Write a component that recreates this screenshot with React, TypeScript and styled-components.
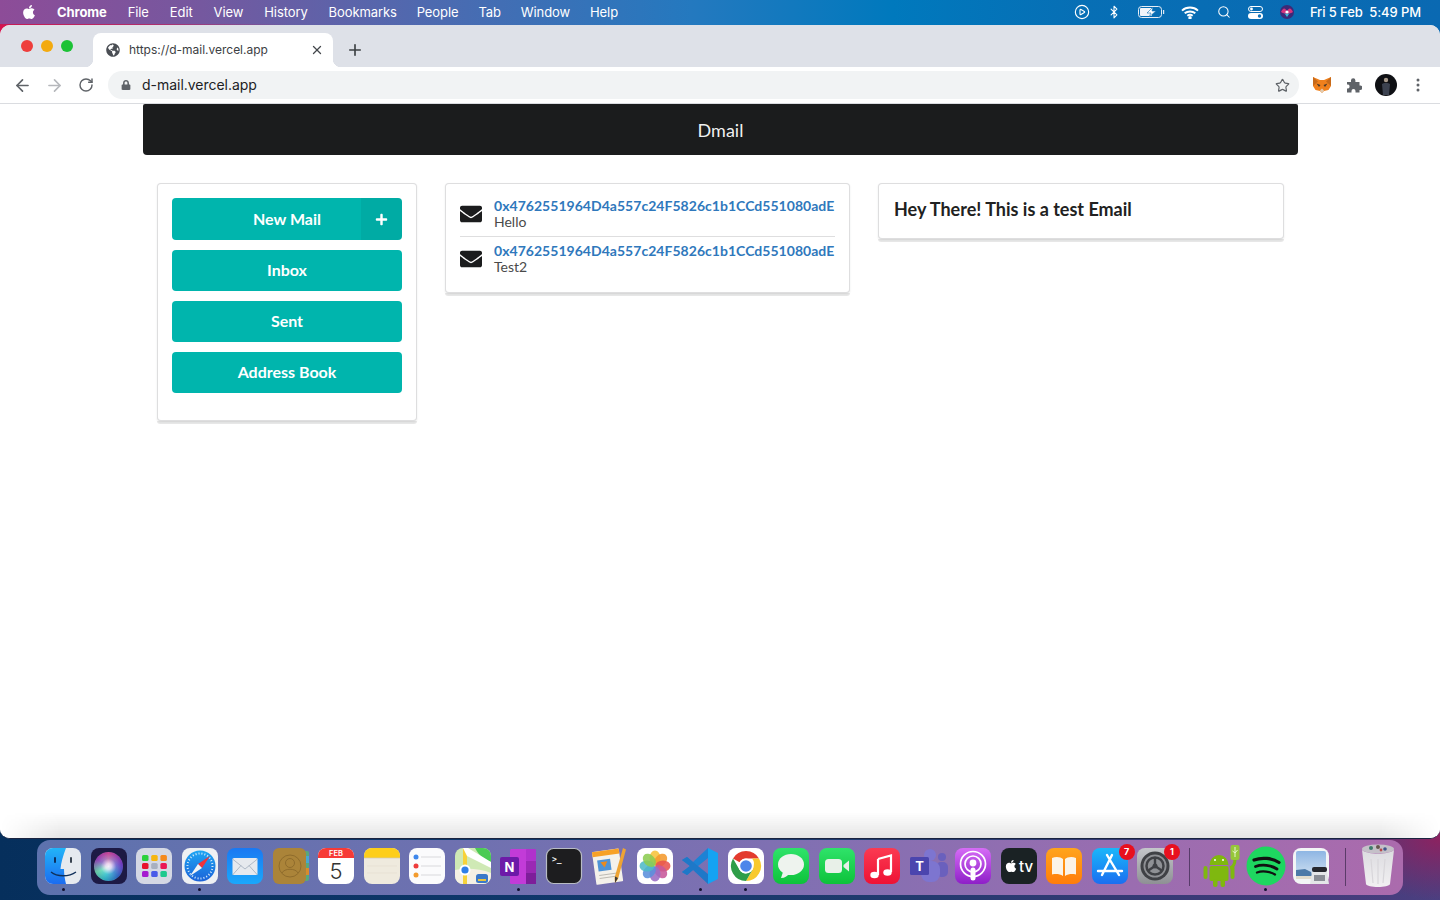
import React from 'react';
import styled, { createGlobalStyle } from 'styled-components';
import { ArrowLeft, ArrowRight, RotateCw, X, Plus, Star, Search, Bluetooth, CirclePlay } from 'lucide-react';
import { FaApple, FaEnvelope, FaGlobeAmericas, FaLock, FaPlus } from 'react-icons/fa';

const Global = createGlobalStyle`
  html, body { margin: 0; padding: 0; height: 100%; overflow: hidden; }
  body { font-family: "Lato", "Liberation Sans", sans-serif; }
  * { box-sizing: border-box; }
`;

const Desktop = styled.div`
  width: 1440px; height: 900px; display: flex; flex-direction: column; overflow: hidden;
  background:
    linear-gradient(90deg, #d6144f 0, #7a58a4 22%, #0a69b2 100%) 0 25px / 100% 14px no-repeat,
    radial-gradient(ellipse 100px 62px at 100% 838px, #8c2260 0, rgba(140,34,96,0) 100%),
    linear-gradient(90deg, #062f5c 0%, #0f376a 35%, #1f3a6e 60%, #3d3a78 85%, #4b3f80 100%);
`;
const MenuBar = styled.header`
  height: 25px; flex: none; display: flex; align-items: center; padding: 0 19px 1px 21px; color: #fff;
  font: 500 13px "Inter", "Liberation Sans", sans-serif;
  background:
    linear-gradient(90deg, #c81a55 0, rgba(200,26,85,.7) 10%, rgba(200,26,85,0) 20%) bottom / 100% 1px no-repeat,
    linear-gradient(90deg, #8d4c98 0%, #75589f 14%, #4d6ab0 30%, #2479bf 48%, #0079bd 62%, #076fb5 75%, #0a69b2 100%);
`;
const MenuItem = styled.span<{ $bold?: boolean; $gap: number }>`
  margin-left: ${p => p.$gap}px; font-weight: ${p => (p.$bold ? 700 : 400)}; letter-spacing: -0.1px; white-space: nowrap;
`;
const Spacer = styled.div`flex: 1;`;
const StatusIcon = styled.span<{ $w: number }>`
  width: ${p => p.$w}px; display: flex; justify-content: center; align-items: center;
`;
const Clock = styled.span`
  font-size: 13px; letter-spacing: -0.1px; white-space: pre; margin-left: 12px;
`;

const Win = styled.main`
  flex: 1; min-height: 0; display: flex; flex-direction: column; position: relative; overflow: hidden;
  border-radius: 10px; background: #fff; border-bottom: 1px solid #1b2440;
`;
const TabStrip = styled.div`
  height: 42px; flex: none; display: flex; background: #dee1e8; padding-top: 8px;
`;
const Lights = styled.div`
  display: flex; gap: 8px; width: 93px; padding: 7px 0 0 21px;
`;
const Light = styled.i<{ $c: string }>`
  width: 12px; height: 12px; border-radius: 50%; background: ${p => p.$c};
`;
const Tab = styled.div`
  position: relative; width: 240px; height: 34px; display: flex; align-items: center; gap: 9px;
  padding: 0 9px 0 13px; background: #fff; border-radius: 8px 8px 0 0; color: #3c4043;
  font: 400 12px "Inter", "Liberation Sans", sans-serif;
  &::before, &::after { content: ""; position: absolute; bottom: 0; width: 8px; height: 8px; }
  &::before { left: -8px; background: radial-gradient(circle at 0 0, transparent 8px, #fff 8.5px); }
  &::after { right: -8px; background: radial-gradient(circle at 100% 0, transparent 8px, #fff 8.5px); }
`;
const TabTitle = styled.span`flex: 1; white-space: nowrap; padding-bottom: 2px; letter-spacing: -0.02px;`;
const NewTab = styled.div`
  width: 24px; height: 34px; margin-left: 10px; display: flex; align-items: center; justify-content: center; color: #3c4043;
`;
const Toolbar = styled.div`
  height: 37px; flex: none; display: flex; align-items: center; padding: 0 6px; background: #fff; border-bottom: 1px solid #dadce0;
`;
const ToolButton = styled.div<{ $c?: string }>`
  width: 32px; height: 28px; display: flex; align-items: center; justify-content: center; flex: none; color: ${p => p.$c || '#5f6368'};
`;
const Omnibox = styled.div`
  flex: 1; height: 28px; margin: 0 7px 0 6px; padding: 0 9px 0 13px; border-radius: 14px; background: #f1f3f4;
  display: flex; align-items: center; gap: 11px; color: #202124; font: 400 14px "Inter", "Liberation Sans", sans-serif; letter-spacing: -0.03px;
`;
const Url = styled.span`flex: 1; padding-bottom: 1px;`;
const Avatar = styled.div`
  width: 22px; height: 22px; border-radius: 50%; display: flex; align-items: center; justify-content: center; overflow: hidden; background: #0f1014;
`;

const Page = styled.div`flex: 1; min-height: 0; background: #fff; position: relative;`;
const Container = styled.div`width: 1155px; margin-left: 143px;`;
const TopBar = styled.div`
  height: 51px; background: #1b1c1d; color: rgba(255,255,255,.95); border-radius: 2px 2px 4px 4px;
  display: flex; align-items: center; justify-content: center; font: 400 18px "Lato", sans-serif;
`;
const Columns = styled.div`
  display: grid; grid-template-columns: 260px 405px 406px; gap: 28px; padding: 0 14px; margin-top: 28px; align-items: start;
`;
const Card = styled.section<{ $h: number }>`
  position: relative; height: ${p => p.$h}px; background: #fff; border: 1px solid rgba(34,36,38,.15); border-radius: 4px;
  box-shadow: 0 1px 2px 0 rgba(34,36,38,.1); padding: 14px;
  &::after { content: ""; position: absolute; left: -1px; right: -1px; bottom: -4px; height: 3px;
    background: rgba(0,0,0,.09); border-radius: 0 0 3px 3px; }
`;
const SideList = styled.div`display: flex; flex-direction: column; gap: 10px;`;
const TealButton = styled.button<{ $h?: number }>`
  position: relative; width: 100%; height: ${p => p.$h || 41}px; border: 0; border-radius: 4px; background: #00b5ad; color: #fff; padding: 0 0 2px;
  font: 700 16px "Lato", sans-serif; display: flex; align-items: center; justify-content: center;
`;
const PlusBox = styled.span`
  position: absolute; right: 0; top: 0; bottom: 0; width: 41px; background: rgba(0,0,0,.05); border-radius: 0 4px 4px 0;
  display: flex; align-items: center; justify-content: center;
`;
const MailList = styled.div`display: flex; flex-direction: column; margin-top: -1px;`;
const MailRow = styled.div`
  display: flex; align-items: center; gap: 12px; color: #1b1c1d;
  & > svg { flex: none; }
  &:first-child { border-bottom: 1px solid rgba(34,36,38,.15); padding-bottom: 5px; margin-bottom: 5px; }
`;
const MailText = styled.div`display: flex; flex-direction: column; height: 34px;`;
const Address = styled.a`
  color: #2f78bc; font: 700 14px/17px "Lato", sans-serif; white-space: nowrap; letter-spacing: 0.03px;
`;
const Subject = styled.span`color: #4a4a4a; font: 400 14px/17px "Lato", sans-serif; margin-top: -1px;`;
const Heading = styled.h3`
  margin: 0 0 0 1px; color: #212121; font: 700 18px/22px "Lato", sans-serif;
`;

const Fade = styled.div`
  position: absolute; left: 0; right: 0; bottom: 0; height: 26px; pointer-events: none;
  background: linear-gradient(180deg, rgba(0,0,0,0), rgba(0,0,0,.1));
  mask-image: linear-gradient(90deg, transparent 0, #000 60px, #000 1380px, transparent 1440px);
`;

const Dock = styled.nav`
  flex: none; height: 55px; margin: 1px 37px 5px; padding: 8px 0 0 8px; border-radius: 13px; display: flex; align-items: flex-start;
  background: linear-gradient(90deg, #5d72ad 0%, #6e71b0 30%, #8070b2 55%, #9a6db0 80%, #ab6bad 100%);
`;
const DockItem = styled.div<{ $active?: boolean }>`
  position: relative; width: 36px; height: 36px; margin-right: 9.5px; flex: none;
  &:last-child { margin-right: 0; }
  & > svg { position: absolute; left: 0; top: 0; overflow: visible; }
  &::after { content: ""; display: ${p => (p.$active ? 'block' : 'none')}; position: absolute; left: 16.5px; top: 40px; width: 3px; height: 3px; border-radius: 50%; background: #101030; }
`;
const Badge = styled.span`
  position: absolute; right: -7px; top: -4px; width: 16px; height: 16px; border-radius: 50%; background: #e8101e; color: #fff;
  font: 700 9px/16px "Inter", sans-serif; text-align: center;
`;
const Sep = styled.div<{ $l: number; $r: number }>`
  width: 1px; flex: none; height: 38px; margin: 0 ${p => p.$r}px 0 ${p => p.$l}px; background: rgba(30,20,50,.55);
`;
const SiriTile = styled.span`
  position: absolute; inset: 0; border-radius: 8px; background: #1d1a44; display: flex; align-items: center; justify-content: center;
`;
const SiriBall = styled.span`
  width: 29px; height: 29px; border-radius: 50%;
  background:
    radial-gradient(circle, #f2eef8 0, rgba(242,238,248,.85) 14%, rgba(120,210,215,.35) 38%, rgba(40,30,80,.15) 66%, rgba(150,150,175,.85) 92%),
    conic-gradient(#e14aa0, #7a3bd0 22%, #2f6fd0 38%, #2fc5d0 55%, #6fe0b0 68%, #a040c0 84%, #e14aa0);
`;
const TvTile = styled.span`
  position: absolute; inset: 0; border-radius: 8px; background: #1a2224; color: #fff; display: flex; align-items: center; justify-content: center; gap: 1px;
  font: 500 15px "Inter", sans-serif;
`;

const Tile: React.FC<{ f: string }> = ({ f }) => <rect x="0" y="0" width="36" height="36" rx="8" fill={f} />;
const Svg: React.FC<{ children: React.ReactNode }> = ({ children }) => (
  <svg width="36" height="36" viewBox="0 0 36 36">{children}</svg>
);

const Finder = () => (
  <Svg>
    <defs><linearGradient id="fnd" x1="0" y1="0" x2="0" y2="1"><stop offset="0" stopColor="#22b4f8" /><stop offset="1" stopColor="#1b6cf0" /></linearGradient></defs>
    <Tile f="#e6eaef" />
    <path d="M8 0H21C18 8 16 15 15.500 21H19C19 27 20 32 21 36H8a8 8 0 0 1-8-8V8a8 8 0 0 1 8-8Z" fill="url(#fnd)" />
    <rect x="9" y="9" width="2" height="6" rx="1" fill="#0d2f5e" /><rect x="25" y="9" width="2" height="6" rx="1" fill="#3a4450" />
    <path d="M6 24C12 29 24 29 31 24" stroke="#10305a" strokeWidth="1.300" fill="none" />
  </Svg>
);
const Launchpad = () => {
  const c = ['#2bd13c', '#f6b60f', '#f58a1c', '#e8112d', '#a8b0c0', '#ea1656', '#a51bd0', '#4a5ae8', '#1dc98e'];
  return (
    <Svg>
      <Tile f="#d4d8e4" />
      {c.map((k, i) => <rect key={k} x={6 + (i % 3) * 9.200} y={7 + Math.floor(i / 3) * 8} width="6.500" height="6" rx="1.500" fill={k} />)}
    </Svg>
  );
};
const Safari = () => (
  <Svg>
    <defs><linearGradient id="saf" x1="0" y1="0" x2="0" y2="1"><stop offset="0" stopColor="#1ea6f4" /><stop offset="1" stopColor="#1c62d8" /></linearGradient></defs>
    <Tile f="#eef0f3" />
    <circle cx="18" cy="18" r="15.500" fill="url(#saf)" />
    <circle cx="18" cy="18" r="12.500" fill="none" stroke="#d8ecfb" strokeWidth="2" strokeDasharray="1 2" />
    <path d="M28 8L16 16L20 20Z" fill="#f0323a" /><path d="M8 28L16 16L20 20Z" fill="#f2f4f6" />
  </Svg>
);
const Mail = () => (
  <Svg>
    <defs><linearGradient id="mal" x1="0" y1="0" x2="0" y2="1"><stop offset="0" stopColor="#1a78f2" /><stop offset="1" stopColor="#1aa8fc" /></linearGradient></defs>
    <Tile f="url(#mal)" />
    <rect x="5.500" y="10" width="25" height="17" rx="1.500" fill="#e6e9ee" />
    <path d="M5.500 11L18 21L30.500 11M5.500 27L14 17.500M30.500 27L22 17.500" stroke="#a8b3c2" strokeWidth=".9" fill="none" />
  </Svg>
);
const Contacts = () => (
  <Svg>
    <rect x="30" y="3" width="6" height="30" rx="2" fill="#58a87a" />
    <rect x="32" y="8" width="4" height="7" fill="#47a8d0" /><rect x="32" y="20" width="4" height="7" fill="#d88b2c" />
    <rect x="0" y="0" width="33" height="36" rx="6" fill="#ab8439" />
    <circle cx="17" cy="18" r="11" fill="none" stroke="#8f6c2c" strokeWidth="1" />
    <circle cx="17" cy="15" r="4.500" fill="none" stroke="#8f6c2c" strokeWidth="1" />
    <path d="M9 25C11 20 23 20 25 25" fill="none" stroke="#8f6c2c" strokeWidth="1" />
  </Svg>
);
const Calendar = () => (
  <Svg>
    <Tile f="#fff" />
    <path d="M8 0H28a8 8 0 0 1 8 8V10H0V8a8 8 0 0 1 8-8Z" fill="#f73a36" />
    <text x="18" y="8" textAnchor="middle" fontFamily="Inter, sans-serif" fontWeight="600" fontSize="7.500" fill="#fff">FEB</text>
    <text x="18" y="31" textAnchor="middle" fontFamily="Inter, sans-serif" fontWeight="300" fontSize="22" fill="#333">5</text>
  </Svg>
);
const Notes = () => (
  <Svg>
    <Tile f="#efeade" />
    <path d="M8 0H28a8 8 0 0 1 8 8V10H0V8a8 8 0 0 1 8-8Z" fill="#fdce1a" />
    <path d="M0 10H36" stroke="#cfc9b8" strokeWidth=".7" /><path d="M3 18H33M3 25H33" stroke="#e2dccd" strokeWidth=".6" />
  </Svg>
);
const Reminders = () => (
  <Svg>
    <Tile f="#fbfbfc" />
    <circle cx="7" cy="9" r="2.500" fill="#3e87ec" /><circle cx="7" cy="18" r="2.500" fill="#ee3b3b" /><circle cx="7" cy="27" r="2.500" fill="#f39b2e" />
    <path d="M12 9H32M12 18H32M12 27H32" stroke="#d9d9dc" strokeWidth="1" />
  </Svg>
);
const MapsIcon = () => (
  <Svg>
    <Tile f="#cfe9b5" />
    <path d="M20 0H28a8 8 0 0 1 8 8V14C30 12 24 8 20 0Z" fill="#4ccb55" />
    <path d="M0 22C10 20 24 20 36 25V28a8 8 0 0 1-8 8H8a8 8 0 0 1-8-8Z" fill="#f5f0e4" />
    <path d="M8 0H12V36H8Z" fill="#f7d23a" />
    <path d="M8 0H13L36 14V20L12 8Z" fill="#fff" />
    <circle cx="10" cy="22" r="5.500" fill="#fff" /><circle cx="10" cy="22" r="3.600" fill="#2f7fe8" />
    <rect x="21" y="26" width="12" height="9" rx="2.500" fill="#3b79c9" /><rect x="23" y="31" width="8" height="2" fill="#e9c33d" />
  </Svg>
);
const OneNote = () => (
  <Svg>
    <rect x="10" y="1" width="18" height="35" rx="1.500" fill="#c23bd8" />
    <rect x="26" y="1" width="10" height="12" rx="1" fill="#b032cc" />
    <rect x="26" y="13" width="10" height="12" fill="#9a28b4" /><rect x="26" y="25" width="10" height="11" fill="#7d1e9a" />
    <rect x="0" y="9" width="19" height="19" rx="2" fill="#6d1aa8" />
    <text x="9.500" y="23.500" textAnchor="middle" fontFamily="Inter, sans-serif" fontWeight="700" fontSize="13" fill="#fff">N</text>
  </Svg>
);
const Terminal = () => (
  <Svg>
    <rect x="0.500" y="0.500" width="35" height="35" rx="7" fill="#1d1d1f" stroke="#b8bcc4" strokeWidth="1.200" />
    <text x="6" y="14" fontFamily="'DejaVu Sans Mono', monospace" fontWeight="700" fontSize="8" fill="#f2f2f2">&gt;_</text>
  </Svg>
);
const Pages = () => (
  <Svg>
    <g transform="rotate(-8 18 18)">
      <rect x="3" y="2" width="27" height="33" rx="1" fill="#f4f1ea" />
      <path d="M3 2H30V7H3Z" fill="#f7a126" />
      <rect x="7" y="11" width="13" height="11" fill="#4e93d6" />
      <path d="M10 13H17L13.500 19Z" fill="#e88a1e" />
      <path d="M7 26H25M7 29H25" stroke="#bdbab2" strokeWidth="1" />
    </g>
    <path d="M32 0L35 1.500L27 31L24 35L23.500 30Z" fill="#eea433" />
    <path d="M24 28.500L27 30L24 35Z" fill="#3e3a36" />
  </Svg>
);
const Photos = () => {
  const c = ['#f7c33a', '#f49a2d', '#e8544e', '#c7589a', '#9a6cc4', '#5b8fdc', '#4fb9c8', '#8ccc52'];
  return (
    <Svg>
      <Tile f="#fff" />
      {c.map((k, i) => (
        <ellipse key={k} cx="18" cy="10" rx="5.500" ry="7.500" fill={k} opacity=".88" transform={`rotate(${i * 45} 18 18)`} />
      ))}
    </Svg>
  );
};
const VSCode = () => (
  <Svg>
    <path d="M26 0L36 5V31L26 36Z" fill="#14a3f2" />
    <path d="M26 0V10L11 22L5 27L0 24L8 18L0 12L5 9L11 14Z" fill="#1d82d4" />
    <path d="M26 36V26L11 14L5 9L0 12L8 18L0 24L5 27L11 22Z" fill="#1e78c8" />
  </Svg>
);
const ChromeIcon = () => (
  <Svg>
    <Tile f="#fff" />
    <path d="M18 3A15 15 0 0 1 31 10.500H18A7.500 7.500 0 0 0 11.500 14.300L5 10.500A15 15 0 0 1 18 3Z" fill="#e33b2e" />
    <path d="M31 10.500A15 15 0 0 1 18 33L24.500 21.800A7.500 7.500 0 0 0 25.500 18A7.500 7.500 0 0 0 24 10.500Z" fill="#f8c92d" />
    <path d="M18 33A15 15 0 0 1 5 10.500L11.500 21.800A7.500 7.500 0 0 0 18 25.500H18L24.500 21.800Z" fill="#2f9e49" />
    <circle cx="18" cy="18" r="7.500" fill="#fff" /><circle cx="18" cy="18" r="5.800" fill="#4d86ea" />
  </Svg>
);
const greenGrad = (id: string) => (
  <defs><linearGradient id={id} x1="0" y1="0" x2="0" y2="1"><stop offset="0" stopColor="#2fe36a" /><stop offset="1" stopColor="#0dc23a" /></linearGradient></defs>
);
const Messages = () => (
  <Svg>
    {greenGrad('msg')}
    <Tile f="url(#msg)" />
    <ellipse cx="18" cy="16.500" rx="13" ry="10.500" fill="#eef3ee" />
    <path d="M10 24L8 30C12 30 14 28 16 26Z" fill="#eef3ee" />
  </Svg>
);
const FaceTime = () => (
  <Svg>
    {greenGrad('ftm')}
    <Tile f="url(#ftm)" />
    <rect x="6" y="11" width="17" height="14" rx="3.500" fill="#e8f0e8" />
    <path d="M24.500 17L30 12.500V23.500L24.500 19Z" fill="#e8f0e8" />
  </Svg>
);
const Music = () => (
  <Svg>
    <defs><linearGradient id="mus" x1="0" y1="0" x2="0" y2="1"><stop offset="0" stopColor="#fb3a52" /><stop offset="1" stopColor="#ee1234" /></linearGradient></defs>
    <Tile f="url(#mus)" />
    <path d="M14 11L27 7.500V24" stroke="#fff" strokeWidth="2.200" fill="none" />
    <path d="M14 11V27" stroke="#fff" strokeWidth="2.200" />
    <ellipse cx="10.500" cy="27" rx="4.200" ry="3.300" fill="#fff" /><ellipse cx="23.500" cy="24.500" rx="4.200" ry="3.300" fill="#fff" />
  </Svg>
);
const Teams = () => (
  <Svg>
    <circle cx="20" cy="7" r="6" fill="#7d75d0" /><circle cx="32" cy="9" r="4" fill="#6a60bd" />
    <rect x="26" y="14" width="12" height="15" rx="5" fill="#6a60bd" />
    <rect x="11" y="13" width="19" height="21" rx="8" fill="#7d75d0" />
    <rect x="0" y="9" width="19" height="18" rx="1.500" fill="#4b45ae" />
    <text x="9.500" y="23" textAnchor="middle" fontFamily="Inter, sans-serif" fontWeight="700" fontSize="13" fill="#fff">T</text>
  </Svg>
);
const Podcasts = () => (
  <Svg>
    <defs><linearGradient id="pod" x1="0" y1="0" x2="0" y2="1"><stop offset="0" stopColor="#d66cf6" /><stop offset="1" stopColor="#8e1fc8" /></linearGradient></defs>
    <Tile f="url(#pod)" />
    <circle cx="18" cy="16" r="12.500" fill="none" stroke="#fff" strokeWidth="1.700" />
    <circle cx="18" cy="16" r="8" fill="none" stroke="#fff" strokeWidth="1.700" />
    <circle cx="18" cy="15" r="3.400" fill="#fff" /><rect x="15.500" y="19.500" width="5" height="13" rx="2.500" fill="#fff" />
  </Svg>
);
const Books = () => (
  <Svg>
    <defs><linearGradient id="bok" x1="0" y1="0" x2="0" y2="1"><stop offset="0" stopColor="#ffa41c" /><stop offset="1" stopColor="#ff7d0a" /></linearGradient></defs>
    <Tile f="url(#bok)" />
    <path d="M6 10C10 8 15 9 17 11V28C14 26 10 25.500 6 26.500Z" fill="#fbf3e6" />
    <path d="M30 10C26 8 21 9 19 11V28C22 26 26 25.500 30 26.500Z" fill="#fbf3e6" />
  </Svg>
);
const AppStore = () => (
  <Svg>
    <defs><linearGradient id="aps" x1="0" y1="0" x2="0" y2="1"><stop offset="0" stopColor="#1ab7fa" /><stop offset="1" stopColor="#1b6ef0" /></linearGradient></defs>
    <Tile f="url(#aps)" />
    <path d="M20 7L10 27M15 7L27 27M6 23H30" stroke="#fff" strokeWidth="2.400" strokeLinecap="round" />
  </Svg>
);
const Prefs = () => (
  <Svg>
    <defs><linearGradient id="prf" x1="0" y1="0" x2="0" y2="1"><stop offset="0" stopColor="#c4c6ca" /><stop offset="1" stopColor="#8e9094" /></linearGradient></defs>
    <Tile f="url(#prf)" />
    <circle cx="18" cy="18" r="14.500" fill="#3f4145" />
    <circle cx="18" cy="18" r="11.500" fill="#8f9195" />
    <circle cx="18" cy="18" r="8.500" fill="none" stroke="#3f4145" strokeWidth="2.500" />
    <path d="M18 18V9M18 18L10.500 23M18 18L25.500 23" stroke="#3f4145" strokeWidth="2.400" />
    <circle cx="18" cy="18" r="2.500" fill="#3f4145" />
  </Svg>
);
const Android = () => (
  <Svg>
    <g fill="#7fb80f">
      <path d="M7.500 17A9.500 10 0 0 1 26.500 17Z" />
      <rect x="7.500" y="18" width="19" height="15" rx="2" />
      <rect x="1.500" y="18" width="4" height="13" rx="2" />
      <rect x="28.500" y="18" width="4" height="13" rx="2" />
      <rect x="11" y="31" width="4.500" height="8" rx="2" /><rect x="18.500" y="31" width="4.500" height="8" rx="2" />
    </g>
    <circle cx="13" cy="12" r="1" fill="#fff" /><circle cx="21" cy="12" r="1" fill="#fff" />
    <path d="M28 20C31 19 33 16 33 11" stroke="#7fb80f" strokeWidth="3" fill="none" />
    <rect x="28.500" y="-3" width="9" height="15" rx="2" fill="#96c63a" />
    <path d="M33 -1V9M30.500 3L33 5L35.500 2" stroke="#e8f5d0" strokeWidth="1" fill="none" />
  </Svg>
);
const Spotify = () => (
  <Svg>
    <circle cx="18" cy="18" r="19.500" fill="#1ed760" />
    <path d="M6 12C14 9 24 10 31 14.500" stroke="#111" strokeWidth="3.200" fill="none" strokeLinecap="round" />
    <path d="M7.500 18.500C14 16 23 17 29 21" stroke="#111" strokeWidth="2.800" fill="none" strokeLinecap="round" />
    <path d="M9 24.500C14.500 22.500 22 23.500 27 26.500" stroke="#111" strokeWidth="2.300" fill="none" strokeLinecap="round" />
  </Svg>
);
const Preview = () => (
  <Svg>
    <defs><linearGradient id="prv" x1="0" y1="0" x2="0" y2="1"><stop offset="0" stopColor="#8eb6e4" /><stop offset="1" stopColor="#d6e4f2" /></linearGradient></defs>
    <Tile f="#f3f5f6" />
    <rect x="3" y="3" width="30" height="28" rx="2" fill="url(#prv)" />
    <path d="M3 22L12 21L18 24L20 29H3Z" fill="#4d7aa8" /><path d="M3 28H19V31H3Z" fill="#e2dccd" />
    <rect x="19" y="19" width="15" height="5" rx="2" fill="#26282e" />
    <path d="M19 24H34L36 36H17Z" fill="#e4e6e8" /><path d="M21 27H32V33H21Z" fill="#8a8e96" />
  </Svg>
);
const Trash = () => (
  <Svg>
    <defs><linearGradient id="trs" x1="0" y1="0" x2="0" y2="1"><stop offset="0" stopColor="#dcdce0" /><stop offset="1" stopColor="#f2f0f2" /></linearGradient></defs>
    <ellipse cx="18" cy="1" rx="16" ry="4.500" fill="#c4c0c8" />
    <path d="M2 2L6 36C7 40 29 40 30 36L34 2C28 7 8 7 2 2Z" fill="url(#trs)" />
    <circle cx="11" cy="0" r="2" fill="#3d7a6c" /><circle cx="18" cy="-1" r="2" fill="#66564e" /><circle cx="25" cy="1" r="1.800" fill="#41568c" /><circle cx="21" cy="2" r="1.400" fill="#b84a4a" />
    <path d="M11 11L13 35M18 11V36M25 11L23 35" stroke="#d8d6da" strokeWidth="1.200" />
  </Svg>
);
const Fox = () => (
  <svg width="18" height="16" viewBox="0 0 18 16">
    <path d="M0 0L7 3H11L18 0L18 9L15.500 13L11 14L9 16L7 14L2.500 13L0 9Z" fill="#f0801c" />
    <path d="M3.500 6.500L7.500 8L6 10ZM14.500 6.500L10.500 8L12 10Z" fill="#4a3a2c" />
    <path d="M7 13.500L9 11.500L11 13.500L9 16Z" fill="#e0ccb4" />
    <path d="M0 0L5 4.500L0 9ZM18 0L13 4.500L18 9Z" fill="#c76a1a" />
  </svg>
);
const Puzzle = () => (
  <svg width="16" height="16" viewBox="0 0 16 16" fill="#5f6368">
    <path d="M1 5H5V3.500A2.200 2.200 0 0 1 9.400 3.500V5H13.500V8.500H14.200A2.200 2.200 0 0 1 14.200 13H13.500V15.500H9.500V14A2 2 0 0 0 5.500 14V15.500H1V11.500H2.300A2.200 2.200 0 0 0 2.300 7.500H1Z" />
  </svg>
);

const dockA: { k: string; n: React.ReactNode; on?: boolean; b?: string }[] = [
  { k: 'finder', n: <Finder />, on: true }, { k: 'siri', n: <SiriTile><SiriBall /></SiriTile> }, { k: 'launch', n: <Launchpad /> },
  { k: 'safari', n: <Safari />, on: true }, { k: 'mail', n: <Mail /> }, { k: 'contacts', n: <Contacts /> },
  { k: 'cal', n: <Calendar /> }, { k: 'notes', n: <Notes /> }, { k: 'rem', n: <Reminders /> }, { k: 'maps', n: <MapsIcon /> },
  { k: 'onenote', n: <OneNote />, on: true }, { k: 'term', n: <Terminal /> }, { k: 'pages', n: <Pages /> }, { k: 'photos', n: <Photos /> },
  { k: 'code', n: <VSCode />, on: true }, { k: 'chrome', n: <ChromeIcon />, on: true }, { k: 'msg', n: <Messages /> }, { k: 'ft', n: <FaceTime /> },
  { k: 'music', n: <Music /> }, { k: 'teams', n: <Teams /> }, { k: 'pod', n: <Podcasts /> },
  { k: 'tv', n: <TvTile><FaApple size={14} />tv</TvTile> }, { k: 'books', n: <Books /> },
  { k: 'store', n: <AppStore />, b: '7' }, { k: 'prefs', n: <Prefs />, b: '1' },
];
const dockB: { k: string; n: React.ReactNode; on?: boolean }[] = [
  { k: 'android', n: <Android /> }, { k: 'spotify', n: <Spotify />, on: true }, { k: 'preview', n: <Preview /> },
];

const menus: [string, number, boolean?][] = [
  ['Chrome', 20, true], ['File', 21], ['Edit', 21], ['View', 21], ['History', 21], ['Bookmarks', 21], ['People', 20], ['Tab', 20], ['Window', 20], ['Help', 20],
];

export default function App() {
  return (
    <Desktop>
      <Global />
      <MenuBar>
        <FaApple size={16} />
        {menus.map(([t, g, b]) => <MenuItem key={t} $gap={g} $bold={b}>{t}</MenuItem>)}
        <Spacer />
        <StatusIcon $w={20}><CirclePlay size={16} strokeWidth={1.700} /></StatusIcon>
        <StatusIcon $w={44}><Bluetooth size={14} strokeWidth={1.800} /></StatusIcon>
        <StatusIcon $w={32}>
          <svg width="27" height="12" viewBox="0 0 27 12">
            <rect x=".5" y=".5" width="23" height="11" rx="3" fill="none" stroke="#e8eef6" />
            <rect x="2" y="2" width="12" height="8" rx="1" fill="#f2f5fa" />
            <path d="M15 1L9 7H13L11 11L18 5H14Z" fill="#fff" stroke="#1070b6" strokeWidth=".6" />
            <rect x="25" y="4" width="1.200" height="4" fill="#dfe8f3" />
          </svg>
        </StatusIcon>
        <StatusIcon $w={44}>
          <svg width="18" height="13" viewBox="0 0 18 13" fill="none" stroke="#fff" strokeWidth="1.900">
            <path d="M1 4.600C5.500 .5 12.500 .5 17 4.600M3.700 7.300C6.600 4.800 11.400 4.800 14.300 7.300M6.300 9.800C7.800 8.700 10.200 8.700 11.700 9.800" />
            <circle cx="9" cy="11.700" r=".8" fill="#fff" stroke="#fff" />
          </svg>
        </StatusIcon>
        <StatusIcon $w={24}><Search size={14} strokeWidth={1.800} /></StatusIcon>
        <StatusIcon $w={40}>
          <svg width="15" height="13" viewBox="0 0 15 13">
            <rect x=".5" y=".5" width="14" height="5" rx="2.500" fill="none" stroke="#fff" />
            <circle cx="3.500" cy="3" r="1.400" fill="#fff" />
            <rect x="0" y="7" width="15" height="6" rx="3" fill="#fff" />
            <circle cx="11.500" cy="10" r="1.700" fill="#1070b6" />
          </svg>
        </StatusIcon>
        <StatusIcon $w={22}>
          <svg width="14" height="14" viewBox="0 0 14 14">
            <circle cx="7" cy="7" r="7" fill="#3c2a78" />
            <path d="M1 7C3 3 5 2 7 7C9 2 11 3 13 7C10 9 4 9 1 7Z" fill="#d8357e" />
            <path d="M3 6C5 10 9 10 11 6L7 12Z" fill="#35b8d8" />
            <circle cx="7" cy="7" r="1.600" fill="#fff" />
          </svg>
        </StatusIcon>
        <Clock>{'Fri 5 Feb  5:49 PM'}</Clock>
      </MenuBar>

      <Win>
        <TabStrip>
          <Lights>
            <Light $c="#ee3e3c" /><Light $c="#f3aa10" /><Light $c="#1cc236" />
          </Lights>
          <Tab>
            <FaGlobeAmericas size={14} color="#4a4e54" />
            <TabTitle>https://d-mail.vercel.app</TabTitle>
            <X size={14} strokeWidth={2.200} color="#44474c" />
          </Tab>
          <NewTab><Plus size={18} strokeWidth={2.200} /></NewTab>
        </TabStrip>
        <Toolbar>
          <ToolButton><ArrowLeft size={19} strokeWidth={2.100} /></ToolButton>
          <ToolButton $c="#b6b8bc"><ArrowRight size={19} strokeWidth={2.100} /></ToolButton>
          <ToolButton><RotateCw size={16} strokeWidth={2.200} /></ToolButton>
          <Omnibox>
            <FaLock size={10} color="#5f6368" />
            <Url>d-mail.vercel.app</Url>
            <Star size={15} strokeWidth={1.900} color="#5f6368" />
          </Omnibox>
          <ToolButton><Fox /></ToolButton>
          <ToolButton><Puzzle /></ToolButton>
          <ToolButton>
            <Avatar>
              <svg width="12" height="20" viewBox="0 0 12 20" fill="#6c6f78">
                <circle cx="6" cy="5" r="2.200" fill="#a89a8c" /><path d="M2 9C3 7.500 9 7.500 10 9L9 20H3Z" fill="#3c4250" />
              </svg>
            </Avatar>
          </ToolButton>
          <ToolButton>
            <svg width="4" height="14" viewBox="0 0 4 14" fill="#5f6368"><circle cx="2" cy="2" r="1.500" /><circle cx="2" cy="7" r="1.500" /><circle cx="2" cy="12" r="1.500" /></svg>
          </ToolButton>
        </Toolbar>
        <Page>
          <Container>
            <TopBar>Dmail</TopBar>
            <Columns>
              <Card $h={238}>
                <SideList>
                  <TealButton $h={42}>New Mail<PlusBox><FaPlus size={13} /></PlusBox></TealButton>
                  <TealButton>Inbox</TealButton>
                  <TealButton>Sent</TealButton>
                  <TealButton>Address Book</TealButton>
                </SideList>
              </Card>
              <Card $h={110}>
                <MailList>
                  <MailRow>
                    <FaEnvelope size={22} />
                    <MailText><Address>0x4762551964D4a557c24F5826c1b1CCd551080adE</Address><Subject>Hello</Subject></MailText>
                  </MailRow>
                  <MailRow>
                    <FaEnvelope size={22} />
                    <MailText><Address>0x4762551964D4a557c24F5826c1b1CCd551080adE</Address><Subject>Test2</Subject></MailText>
                  </MailRow>
                </MailList>
              </Card>
              <Card $h={56}>
                <Heading>Hey There! This is a test Email</Heading>
              </Card>
            </Columns>
          </Container>
          <Fade />
        </Page>
      </Win>

      <Dock>
        {dockA.map(d => (
          <DockItem key={d.k} $active={d.on}>{d.n}{d.b && <Badge>{d.b}</Badge>}</DockItem>
        ))}
        <Sep $l={6} $r={12.5} />
        {dockB.map(d => <DockItem key={d.k} $active={d.on}>{d.n}</DockItem>)}
        <Sep $l={6} $r={14} />
        <DockItem><Trash /></DockItem>
      </Dock>
    </Desktop>
  );
}
